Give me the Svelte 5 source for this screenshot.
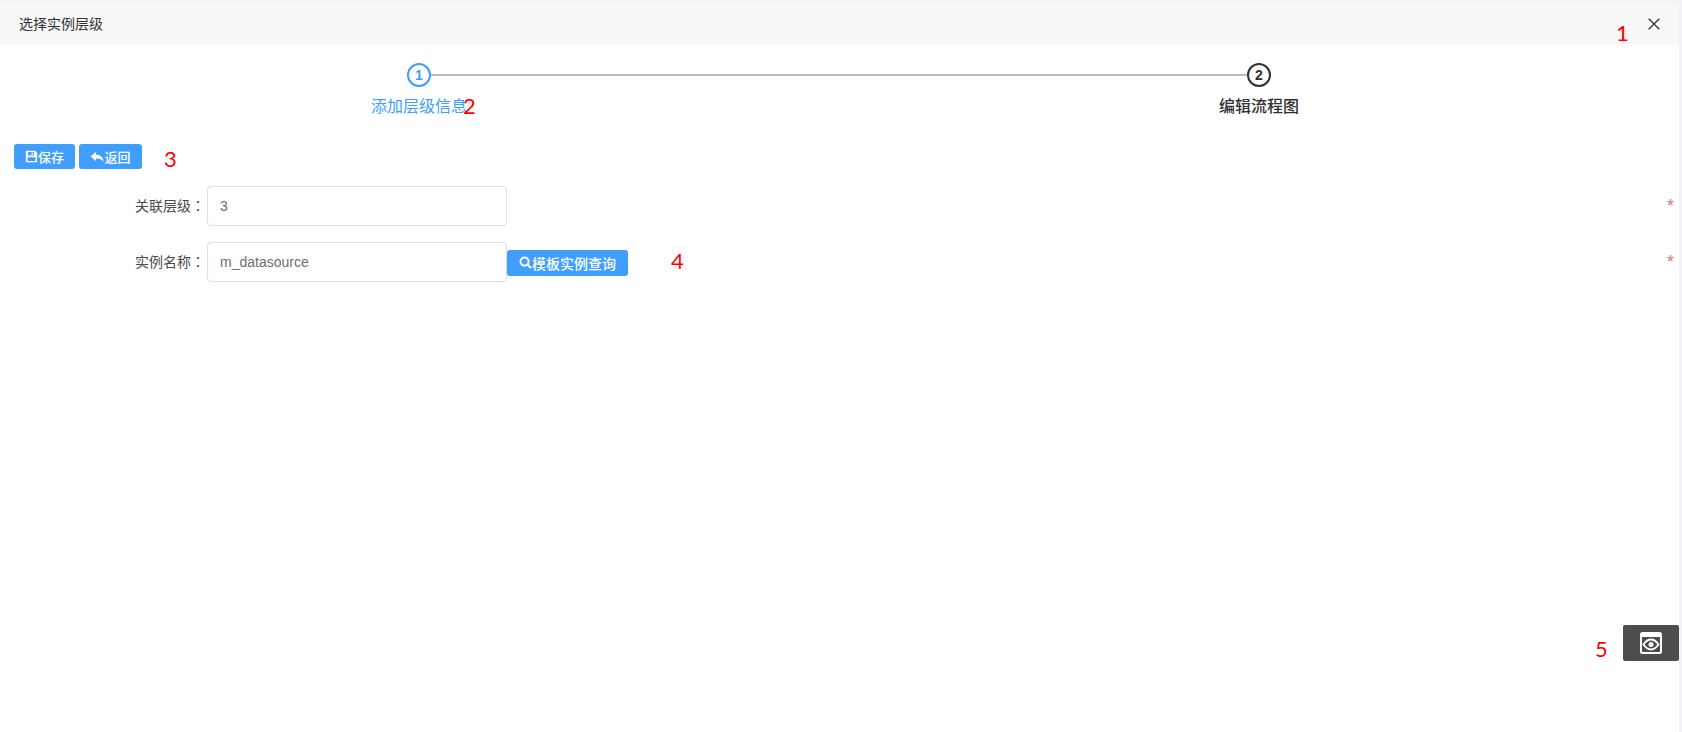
<script>
  const rows = [
    { label: '关联层级', value: '3' },
    { label: '实例名称', value: 'm_datasource', query: true }
  ];
  const notes = [
    { n: 1, x: 1616, y: 19 },
    { n: 2, x: 463, y: 92 },
    { n: 3, x: 164, y: 145 },
    { n: 4, x: 671, y: 247 },
    { n: 5, x: 1595, y: 635 }
  ];
</script>

<div class="page">
  <main class="dialog">
    <header class="head">
      <span class="title">选择实例层级</span>
      <svg class="close" viewBox="0 0 12 12" width="12" height="12" aria-label="关闭">
        <path d="M.7.7l10.6 10.600M11.300.7L.7 11.300" />
      </svg>
    </header>

    <div class="steps">
      <div class="step active">
        <span class="dot">1</span>
        <span class="name">添加层级信息</span>
      </div>
      <div class="line"></div>
      <div class="step">
        <span class="dot">2</span>
        <span class="name">编辑流程图</span>
      </div>
    </div>

    <div class="toolbar">
      <button class="btn save">
        <svg viewBox="0 0 12 12" width="13" height="13">
          <path fill-rule="evenodd" d="M.8.8h8.600L11.200 2.600v8.600H.8zM2.800 1.900v3.200h5.400V1.900zM6 2.500h1.300v1.900H6zM2.300 6.600v3.500h7.400V6.600z" />
        </svg>保存
      </button>
      <button class="btn back">
        <svg viewBox="0 0 14 12" width="14" height="12">
          <path d="M6 1v2.800c4.200 0 7.200 2.200 7.600 7-1.400-2.500-3.600-3.400-7.600-3.400V10L.6 5.500z" />
        </svg>返回
      </button>
    </div>

    <form class="form">
      {#each rows as row}
        <div class="row">
          <span class="label">{row.label}<span class="colon">：</span></span>
          <input class="input" value={row.value} />
          {#if row.query}
            <button type="button" class="btn query">
              <svg viewBox="0 0 14 14" width="13" height="13">
                <circle cx="6" cy="6" r="4.400" />
                <path d="M9.200 9.200l3.800 3.800" />
              </svg>模板实例查询
            </button>
          {/if}
          <span class="star">*</span>
        </div>
      {/each}
    </form>
  </main>
  <div class="rail"></div>

  <button class="float" aria-label="预览">
    <svg viewBox="0 0 24 24" width="24" height="24">
      <path fill-rule="evenodd" d="M3.500 1h17A2.500 2.500 0 0 1 23 3.500v17a2.500 2.500 0 0 1-2.500 2.500h-17A2.500 2.500 0 0 1 1 20.500v-17A2.500 2.500 0 0 1 3.500 1zM3 6v14.500c0 .3.200.5.500.5h17c.3 0 .5-.2.500-.5V6z" fill="#fff" />
      <path d="M4.500 13.500C7 9.800 9.300 8.500 12 8.500s5 1.300 7.500 5c-2.500 3.700-4.800 5-7.500 5s-5-1.300-7.500-5z" fill="none" stroke="#fff" stroke-width="1.800" />
      <circle cx="12" cy="13.500" r="2.500" fill="#fff" />
    </svg>
  </button>

  {#each notes as note}
    <span class="note" style="left:{note.x}px;top:{note.y}px">{note.n}</span>
  {/each}
</div>

<style>
  :global(body) {
    margin: 0;
    background: #fff;
  }
  .page {
    position: relative;
    display: flex;
    height: 732px;
    overflow: hidden;
    font-family: "Liberation Sans", "Noto Sans CJK SC", sans-serif;
    color: #303133;
    font-size: 14px;
  }
  .dialog {
    flex: 1;
    min-width: 0;
    border-top: 3px solid #f0f2f5;
  }
  .rail {
    width: 3px;
    background: #f0f2f5;
  }
  .head {
    height: 42px;
    background: #f8f8f8;
    display: flex;
    align-items: center;
    justify-content: space-between;
    padding: 0 19px 0 19px;
  }
  .title {
    color: #333;
    line-height: 42px;
  }
  .close path {
    fill: none;
    stroke: #303133;
    stroke-width: 1.300;
  }
  .steps {
    display: flex;
    align-items: flex-start;
    box-sizing: border-box;
    height: 99px;
    padding: 18px 0 0 407px;
  }
  .step {
    width: 24px;
    flex: none;
    display: flex;
    flex-direction: column;
    align-items: center;
  }
  .dot {
    flex: none;
    width: 24px;
    height: 24px;
    box-sizing: border-box;
    border: 2px solid #303133;
    border-radius: 50%;
    display: flex;
    align-items: center;
    justify-content: center;
    font-size: 14px;
    font-weight: 700;
  }
  .name {
    white-space: nowrap;
    font-size: 16px;
    line-height: 24px;
    margin-top: 8px;
    font-weight: 500;
  }
  .step.active .dot {
    border-color: #409eff;
    color: #409eff;
  }
  .step.active .name {
    color: #409eff;
    font-weight: 400;
  }
  .line {
    flex: none;
    width: 816px;
    height: 2px;
    margin-top: 11px;
    background: #b8bbc6;
  }
  .toolbar {
    display: flex;
    gap: 4px;
    padding-left: 14px;
    height: 25px;
  }
  .btn {
    display: inline-flex;
    align-items: center;
    justify-content: center;
    border: 0;
    padding: 0;
    background: #409eff;
    color: #fff;
    border-radius: 3px;
    font-family: inherit;
    font-size: 13px;
    font-weight: 500;
  }
  .btn svg {
    flex: none;
    fill: #fff;
  }
  .save {
    width: 61px;
    gap: 0;
  }
  .back {
    width: 63px;
  }
  .form {
    display: flex;
    flex-direction: column;
    gap: 16px;
    margin-top: 17px;
  }
  .row {
    display: flex;
    align-items: center;
    height: 40px;
    padding-left: 135px;
    padding-right: 5px;
  }
  .label {
    width: 70px;
    margin: 0 2px 2px 0;
    flex: none;
    white-space: nowrap;
    color: #4a4a4a;
  }
  .colon {
    font-family: "Noto Sans CJK TC", sans-serif;
  }
  .input {
    flex: none;
    width: 300px;
    height: 40px;
    box-sizing: border-box;
    border: 1px solid #dcdfe6;
    border-radius: 4px;
    padding: 0 12px;
    font: inherit;
    color: #6b6e74;
    outline: none;
    background: #fff;
  }
  .query {
    flex: none;
    width: 121px;
    height: 26px;
    margin: 1px 0 0 0;
    font-size: 14px;
  }
  .query svg circle,
  .query svg path {
    fill: none;
    stroke: #fff;
    stroke-width: 2.200;
  }
  .star {
    margin-left: auto;
    color: #f56c6c;
    font-size: 18px;
    line-height: 18px;
    margin-bottom: 1px;
  }
  .float {
    position: absolute;
    left: 1623px;
    top: 625px;
    width: 56px;
    height: 36px;
    border: 0;
    padding: 0;
    border-radius: 2px;
    background: #4d4d4d;
    display: flex;
    align-items: center;
    justify-content: center;
  }
  .note {
    position: absolute;
    color: #f00;
    font-family: Lato, sans-serif;
    font-size: 22px;
    line-height: 28px;
  }
</style>
